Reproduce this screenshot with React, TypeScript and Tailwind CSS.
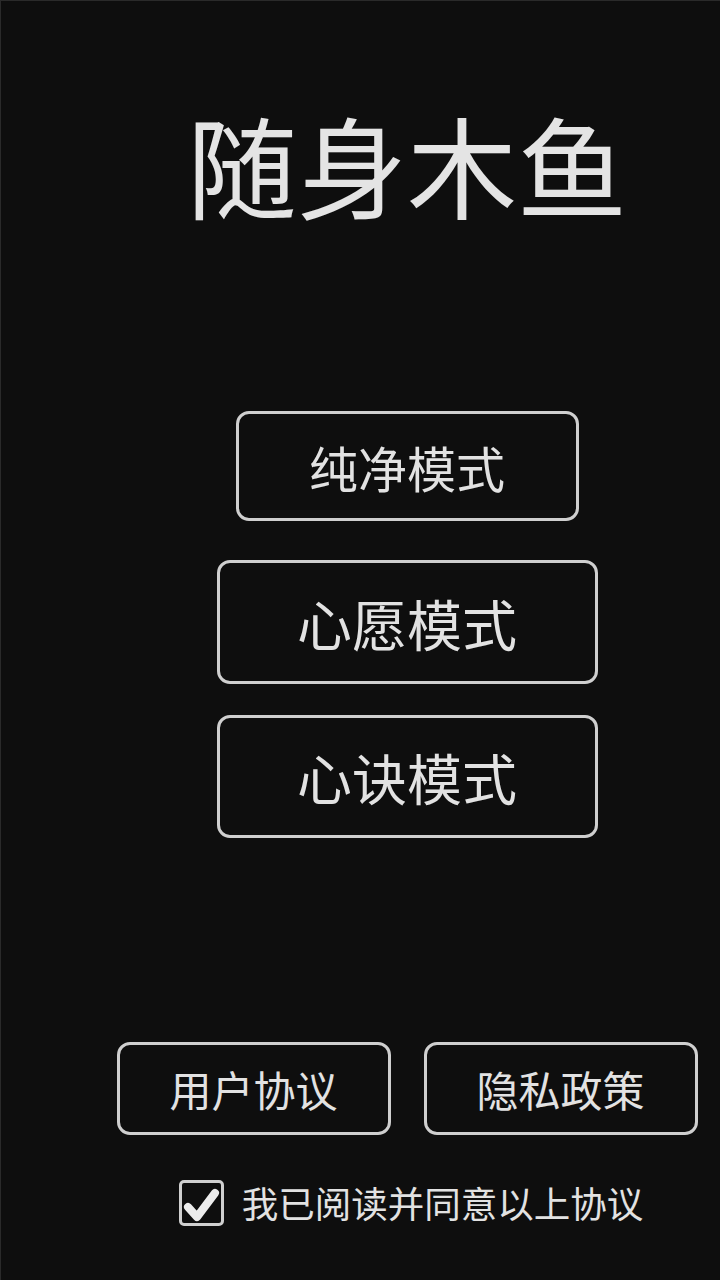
import React from "react";

const font = { fontFamily: '"Noto Sans CJK SC", "Noto Sans", sans-serif' };

export default function App() {
  return (
    <div
      className="w-[720px] h-[1280px] bg-[#0e0e0e] border-t border-l border-[#2a2a2a] flex flex-col items-center pl-[93px] overflow-hidden"
      style={font}
    >
      <div className="mt-[107px] text-[110px] leading-none text-[#e4e4e4]">随身木鱼</div>

      <div className="mt-[193px]">
        <div className="flex items-center justify-center rounded-[13px] border-[3px] border-[#cfcfcf] w-[343px] h-[110px]">
          <span className="text-[49px] leading-none text-[#e2e2e2]">纯净模式</span>
        </div>
      </div>
      <div className="mt-[39px]">
        <div className="flex items-center justify-center rounded-[13px] border-[3px] border-[#cfcfcf] w-[381px] h-[124px]">
          <span className="text-[55px] leading-none text-[#e2e2e2]">心愿模式</span>
        </div>
      </div>
      <div className="mt-[31px]">
        <div className="flex items-center justify-center rounded-[13px] border-[3px] border-[#cfcfcf] w-[381px] h-[123px]">
          <span className="text-[55px] leading-none text-[#e2e2e2]">心诀模式</span>
        </div>
      </div>

      <div className="mt-[204px] flex gap-[33px]">
        <div className="flex items-center justify-center rounded-[13px] border-[3px] border-[#cfcfcf] w-[274px] h-[93px]">
          <span className="text-[42px] leading-none text-[#e2e2e2]">用户协议</span>
        </div>
        <div className="flex items-center justify-center rounded-[13px] border-[3px] border-[#cfcfcf] w-[274px] h-[93px]">
          <span className="text-[42px] leading-none text-[#e2e2e2]">隐私政策</span>
        </div>
      </div>

      <div className="mt-[45px] ml-[8px] flex items-center gap-[18px]">
        <div className="w-[45px] h-[46px] rounded-[5px] border-[3px] border-[#cfcfcf] flex items-center justify-center">
          <svg width="39" height="40" viewBox="0 0 39 40">
            <path
              d="M6 24 L15 34 L33 10"
              fill="none"
              stroke="#ececec"
              strokeWidth="8"
              strokeLinecap="round"
              strokeLinejoin="round"
            />
          </svg>
        </div>
        <span className="text-[36.5px] leading-none text-[#e2e2e2]">我已阅读并同意以上协议</span>
      </div>
    </div>
  );
}
